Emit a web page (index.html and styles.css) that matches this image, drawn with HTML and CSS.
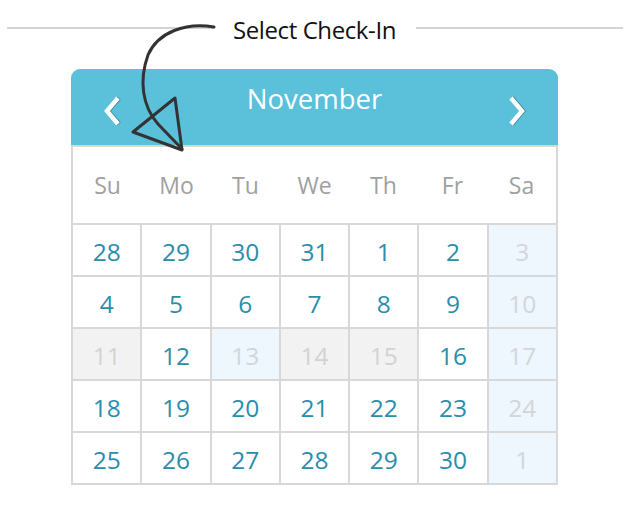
FILE: index.html
```html
<!DOCTYPE html>
<html lang="en">
<head>
  <meta charset="UTF-8">
  <title>Select Check-In</title>
  <link rel="stylesheet" href="styles.css">
</head>
<body>

<div class="title-row">
  <span class="rule"></span>
  <span class="title">Select Check-In</span>
  <span class="rule"></span>
</div>

<div class="calendar">
  <div class="cal-header">
    <svg class="nav" width="20" height="30" viewBox="0 0 20 30">
      <polyline points="15,2 4,15 15,28" />
    </svg>
    <div class="month">November</div>
    <svg class="nav" width="20" height="30" viewBox="0 0 20 30">
      <polyline points="5,2 16,15 5,28" />
    </svg>
  </div>

  <div class="weekdays">
    <span>Su</span><span>Mo</span><span>Tu</span><span>We</span><span>Th</span><span>Fr</span><span>Sa</span>
  </div>

  <div class="days">
    <span>28</span><span>29</span><span>30</span><span>31</span><span>1</span><span>2</span><span class="weekend">3</span>
    <span>4</span><span>5</span><span>6</span><span>7</span><span>8</span><span>9</span><span class="weekend">10</span>
    <span class="off">11</span><span>12</span><span class="weekend">13</span><span class="off">14</span><span class="off">15</span><span>16</span><span class="weekend">17</span>
    <span>18</span><span>19</span><span>20</span><span>21</span><span>22</span><span>23</span><span class="weekend">24</span>
    <span>25</span><span>26</span><span>27</span><span>28</span><span>29</span><span>30</span><span class="weekend">1</span>
  </div>
</div>

<!-- hand drawn pointer from the label to the grid -->
<svg class="pointer" width="642" height="512" viewBox="0 0 642 512">
  <path d="M214,27 C186,22 158,32 148,55 C139,80 142,106 158,124 L182,149" />
  <path d="M133,132 L175,98 L182,150 Z" />
</svg>

</body>
</html>
```

FILE: styles.css
```css
body {
  margin: 0;
  background: #fff;
  font-family: "Open Sans", sans-serif;
  position: relative;
}

.title-row {
  display: flex;
  align-items: center;
  margin-left: 7px;
  width: 616px;
  height: 30px;
  padding-top: 15px;
}

.rule {
  flex: 1;
  height: 2px;
  background: #d4d4d4;
  margin-bottom: 4px;
}

.title {
  margin: 0 20px 0 19px;
  font-size: 24px;
  letter-spacing: -0.4px;
  color: #111;
  line-height: 30px;
}

.calendar {
  margin: 24px 0 0 71px;
  width: 487px;
}

.cal-header {
  height: 76px;
  background: #5bc0da;
  border-radius: 9px 9px 0 0;
  display: flex;
  align-items: center;
  justify-content: space-between;
  padding: 0 32px;
}

.month {
  color: #fff;
  font-size: 27.5px;
  align-self: flex-start;
  padding-top: 11px;
}

.nav {
  margin-top: 8px;
  filter: drop-shadow(1px 0 0 rgba(0, 0, 0, 0.35));
}

.nav polyline {
  fill: none;
  stroke: #fff;
  stroke-width: 4.5;
}

.weekdays {
  display: grid;
  grid-template-columns: repeat(7, 1fr);
  height: 76px;
  border: 2px solid #d8d8d8;
  border-bottom: none;
  align-items: center;
}

.weekdays span {
  text-align: center;
  color: #a0a0a0;
  font-size: 23px;
}

.days {
  display: grid;
  grid-template-columns: repeat(7, 1fr);
  grid-auto-rows: 50px;
  gap: 2px;
  background: #d8d8d8;
  border: 2px solid #d8d8d8;
}

.days span {
  background: #fff;
  display: flex;
  align-items: center;
  justify-content: center;
  padding-top: 3px;
  font-size: 24.5px;
  color: #2a8dac;
}

.days .weekend {
  background: #eef7fd;
  color: #d2d6da;
}

.days .off {
  background: #f2f2f2;
  color: #d2d2d2;
}

.pointer {
  position: absolute;
  left: 0;
  top: 0;
  pointer-events: none;
}

.pointer path {
  fill: none;
  stroke: #333;
  stroke-width: 3;
  stroke-linejoin: round;
  stroke-linecap: round;
}
```
